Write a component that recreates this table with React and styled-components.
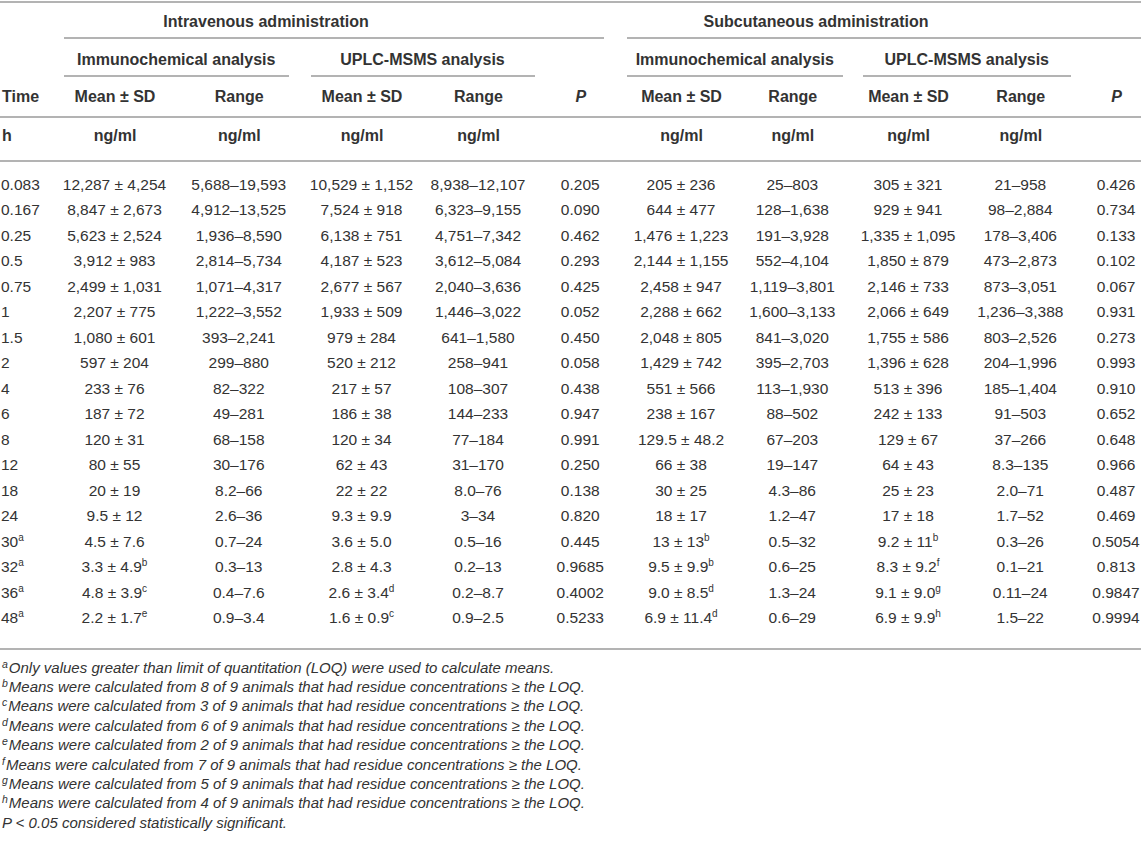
import React from 'react';
import styled, { createGlobalStyle } from 'styled-components';

const GlobalStyle = createGlobalStyle`
  html, body {
    margin: 0;
    padding: 0;
    background: #ffffff;
  }
  body {
    font-family: "Liberation Sans", Arial, Helvetica, sans-serif;
    color: #333333;
  }
`;

const LINE = '#b3b3b3';

// column widths, picked so the cell centres sit where the reference has them
const COLS = [52, 126, 122.5, 123, 110, 94.5, 107, 115.5, 116, 108.5, 66];

const rows = [
  ['0.083', '12,287 ± 4,254', '5,688–19,593', '10,529 ± 1,152', '8,938–12,107', '0.205', '205 ± 236', '25–803', '305 ± 321', '21–958', '0.426'],
  ['0.167', '8,847 ± 2,673', '4,912–13,525', '7,524 ± 918', '6,323–9,155', '0.090', '644 ± 477', '128–1,638', '929 ± 941', '98–2,884', '0.734'],
  ['0.25', '5,623 ± 2,524', '1,936–8,590', '6,138 ± 751', '4,751–7,342', '0.462', '1,476 ± 1,223', '191–3,928', '1,335 ± 1,095', '178–3,406', '0.133'],
  ['0.5', '3,912 ± 983', '2,814–5,734', '4,187 ± 523', '3,612–5,084', '0.293', '2,144 ± 1,155', '552–4,104', '1,850 ± 879', '473–2,873', '0.102'],
  ['0.75', '2,499 ± 1,031', '1,071–4,317', '2,677 ± 567', '2,040–3,636', '0.425', '2,458 ± 947', '1,119–3,801', '2,146 ± 733', '873–3,051', '0.067'],
  ['1', '2,207 ± 775', '1,222–3,552', '1,933 ± 509', '1,446–3,022', '0.052', '2,288 ± 662', '1,600–3,133', '2,066 ± 649', '1,236–3,388', '0.931'],
  ['1.5', '1,080 ± 601', '393–2,241', '979 ± 284', '641–1,580', '0.450', '2,048 ± 805', '841–3,020', '1,755 ± 586', '803–2,526', '0.273'],
  ['2', '597 ± 204', '299–880', '520 ± 212', '258–941', '0.058', '1,429 ± 742', '395–2,703', '1,396 ± 628', '204–1,996', '0.993'],
  ['4', '233 ± 76', '82–322', '217 ± 57', '108–307', '0.438', '551 ± 566', '113–1,930', '513 ± 396', '185–1,404', '0.910'],
  ['6', '187 ± 72', '49–281', '186 ± 38', '144–233', '0.947', '238 ± 167', '88–502', '242 ± 133', '91–503', '0.652'],
  ['8', '120 ± 31', '68–158', '120 ± 34', '77–184', '0.991', '129.5 ± 48.2', '67–203', '129 ± 67', '37–266', '0.648'],
  ['12', '80 ± 55', '30–176', '62 ± 43', '31–170', '0.250', '66 ± 38', '19–147', '64 ± 43', '8.3–135', '0.966'],
  ['18', '20 ± 19', '8.2–66', '22 ± 22', '8.0–76', '0.138', '30 ± 25', '4.3–86', '25 ± 23', '2.0–71', '0.487'],
  ['24', '9.5 ± 12', '2.6–36', '9.3 ± 9.9', '3–34', '0.820', '18 ± 17', '1.2–47', '17 ± 18', '1.7–52', '0.469'],
  ['30^a', '4.5 ± 7.6', '0.7–24', '3.6 ± 5.0', '0.5–16', '0.445', '13 ± 13^b', '0.5–32', '9.2 ± 11^b', '0.3–26', '0.5054'],
  ['32^a', '3.3 ± 4.9^b', '0.3–13', '2.8 ± 4.3', '0.2–13', '0.9685', '9.5 ± 9.9^b', '0.6–25', '8.3 ± 9.2^f', '0.1–21', '0.813'],
  ['36^a', '4.8 ± 3.9^c', '0.4–7.6', '2.6 ± 3.4^d', '0.2–8.7', '0.4002', '9.0 ± 8.5^d', '1.3–24', '9.1 ± 9.0^g', '0.11–24', '0.9847'],
  ['48^a', '2.2 ± 1.7^e', '0.9–3.4', '1.6 ± 0.9^c', '0.9–2.5', '0.5233', '6.9 ± 11.4^d', '0.6–29', '6.9 ± 9.9^h', '1.5–22', '0.9994'],
];

const notes = [
  ['a', 'Only values greater than limit of quantitation (LOQ) were used to calculate means.'],
  ['b', 'Means were calculated from 8 of 9 animals that had residue concentrations ≥ the LOQ.'],
  ['c', 'Means were calculated from 3 of 9 animals that had residue concentrations ≥ the LOQ.'],
  ['d', 'Means were calculated from 6 of 9 animals that had residue concentrations ≥ the LOQ.'],
  ['e', 'Means were calculated from 2 of 9 animals that had residue concentrations ≥ the LOQ.'],
  ['f', 'Means were calculated from 7 of 9 animals that had residue concentrations ≥ the LOQ.'],
  ['g', 'Means were calculated from 5 of 9 animals that had residue concentrations ≥ the LOQ.'],
  ['h', 'Means were calculated from 4 of 9 animals that had residue concentrations ≥ the LOQ.'],
];

const subHeads = ['Mean ± SD', 'Range', 'Mean ± SD', 'Range'];

const Value = ({ text }) => {
  const [main, sup] = text.split('^');
  return (
    <>
      {main}
      {sup && <Sup>{sup}</Sup>}
    </>
  );
};

export default function App() {
  const last = COLS.length - 1;
  return (
    <>
      <GlobalStyle />
      <Page>
        <Table>
          <colgroup>
            {COLS.map((w, i) => <col key={i} style={{ width: w }} />)}
          </colgroup>
          <thead>
            <HeadRow $top>
              <GroupCell $pt={10} />
              <GroupCell colSpan={5} $pt={10}>
                <GroupLabel $ml={12} $mr={24} $pr={136}>Intravenous administration</GroupLabel>
              </GroupCell>
              <GroupCell colSpan={5} $pt={10}>
                <GroupLabel $ml={-1} $mr={0} $pr={136}>Subcutaneous administration</GroupLabel>
              </GroupCell>
            </HeadRow>
            <HeadRow>
              <GroupCell $pt={12} />
              <GroupCell colSpan={2} $pt={12}>
                <GroupLabel $ml={12} $mr={12}>Immunochemical analysis</GroupLabel>
              </GroupCell>
              <GroupCell colSpan={2} $pt={12}>
                <GroupLabel $ml={10} $mr={-1}>UPLC-MSMS analysis</GroupLabel>
              </GroupCell>
              <GroupCell $pt={12} />
              <GroupCell colSpan={2} $pt={12}>
                <GroupLabel $ml={-1} $mr={8}>Immunochemical analysis</GroupLabel>
              </GroupCell>
              <GroupCell colSpan={2} $pt={12}>
                <GroupLabel $ml={12} $mr={4}>UPLC-MSMS analysis</GroupLabel>
              </GroupCell>
              <GroupCell $pt={12} />
            </HeadRow>
            <HeadRow $ruled>
              <HeadCell $left $pad="11px 0 10px 2px">Time</HeadCell>
              {subHeads.map((t, i) => <HeadCell key={i} $pad="11px 0 10px">{t}</HeadCell>)}
              <HeadCell $pad="11px 0 10px"><PLabel>P</PLabel></HeadCell>
              {subHeads.map((t, i) => <HeadCell key={i} $pad="11px 0 10px">{t}</HeadCell>)}
              <HeadCell $pad="11px 0 10px 17px"><PLabel>P</PLabel></HeadCell>
            </HeadRow>
            <HeadRow $ruled>
              <HeadCell $left $pad="9px 0 15px 2px">h</HeadCell>
              {[0, 1, 2, 3].map((i) => <HeadCell key={i} $pad="9px 0 15px">ng/ml</HeadCell>)}
              <HeadCell $pad="9px 0 15px" />
              {[0, 1, 2, 3].map((i) => <HeadCell key={i} $pad="9px 0 15px">ng/ml</HeadCell>)}
              <HeadCell $pad="9px 0 15px" />
            </HeadRow>
          </thead>
          <tbody>
            {rows.map((r, ri) => (
              <BodyRow key={ri} $first={ri === 0} $last={ri === rows.length - 1}>
                {r.map((c, ci) => (
                  <Cell key={ci} $left={ci === 0} $end={ci === last}>
                    <Value text={c} />
                  </Cell>
                ))}
              </BodyRow>
            ))}
          </tbody>
        </Table>
        <Notes>
          {notes.map(([k, t]) => (
            <Note key={k}>
              <NoteMark>{k}</NoteMark>
              {t}
            </Note>
          ))}
          <Note>P &lt; 0.05 considered statistically significant.</Note>
        </Notes>
      </Page>
    </>
  );
}

const Page = styled.div`
  width: 1143px;
  padding-top: 1px;
`;

const Table = styled.table`
  width: 1141px;
  table-layout: fixed;
  border-collapse: collapse;
  font-size: 15.5px;
  line-height: 18px;
`;

const HeadRow = styled.tr`
  border-top: ${(p) => (p.$top ? `2px solid ${LINE}` : 'none')};
  border-bottom: ${(p) => (p.$ruled ? `2px solid ${LINE}` : 'none')};
`;

const HeadCell = styled.th`
  font-weight: bold;
  font-size: 16px;
  text-align: ${(p) => (p.$left ? 'left' : 'center')};
  vertical-align: bottom;
  white-space: nowrap;
  padding: ${(p) => p.$pad || '0'};
`;

const GroupCell = styled(HeadCell)`
  padding: ${(p) => p.$pt}px 0 0;
`;

const GroupLabel = styled.div`
  margin: 0 ${(p) => p.$mr}px 0 ${(p) => p.$ml}px;
  padding: 0 ${(p) => p.$pr || 0}px 6px 0;
  border-bottom: 2px solid ${LINE};
`;

const PLabel = styled.span`
  font-style: italic;
`;

const BodyRow = styled.tr`
  border-bottom: ${(p) => (p.$last ? `2px solid ${LINE}` : 'none')};

  & > td {
    padding-top: ${(p) => (p.$first ? '12.5px' : '3px')};
    padding-bottom: ${(p) => (p.$last ? '20.5px' : '3.5px')};
  }
`;

const Cell = styled.td`
  text-align: ${(p) => (p.$left ? 'left' : 'center')};
  padding-left: ${(p) => (p.$left ? '1px' : p.$end ? '17px' : '0')};
  line-height: 19px;
  white-space: nowrap;
`;

const Sup = styled.sup`
  font-size: 10px;
  line-height: 0;
  vertical-align: 6px;
`;

const Notes = styled.div`
  padding: 8px 0 0 2px;
  font-size: 15px;
  line-height: 19.4px;
  font-style: italic;
`;

const Note = styled.div`
  white-space: nowrap;
`;

const NoteMark = styled.sup`
  font-size: 10.5px;
  line-height: 0;
  vertical-align: 5px;
  margin-right: 1px;
`;
